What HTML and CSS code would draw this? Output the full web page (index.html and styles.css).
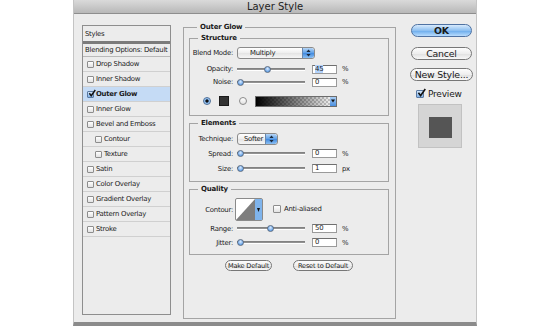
FILE: index.html
```html
<!DOCTYPE html>
<html lang="en">

<head>
    <meta charset="UTF-8">
    <meta name="viewport" content="width=device-width, initial-scale=1.0">
    <title>Layer Style</title>
    <link rel="stylesheet" href="styles.css">
</head>

<body>
    <div class="window">
        <div class="titlebar">Layer Style</div>

        <div class="content">
            <!-- left: list of effects -->
            <div class="list">
                <div class="item head">Styles</div>
                <div class="item blend">Blending Options: Default</div>
                <div class="item"><span class="cb"></span>Drop Shadow</div>
                <div class="item"><span class="cb"></span>Inner Shadow</div>
                <div class="item on">
                    <span class="cb checked">
                        <svg width="9" height="9" viewBox="0 0 9 9"><path d="M1.5 4.2 L3.6 7 L8.2 0.6" fill="none" stroke="#111" stroke-width="1.6"/></svg>
                    </span>Outer Glow
                </div>
                <div class="item"><span class="cb"></span>Inner Glow</div>
                <div class="item"><span class="cb"></span>Bevel and Emboss</div>
                <div class="item sub"><span class="cb"></span>Contour</div>
                <div class="item sub"><span class="cb"></span>Texture</div>
                <div class="item"><span class="cb"></span>Satin</div>
                <div class="item"><span class="cb"></span>Color Overlay</div>
                <div class="item"><span class="cb"></span>Gradient Overlay</div>
                <div class="item"><span class="cb"></span>Pattern Overlay</div>
                <div class="item"><span class="cb"></span>Stroke</div>
            </div>

            <!-- middle: settings -->
            <div class="group outer">
                <div class="legend">Outer Glow</div>

                <div class="group structure">
                    <div class="legend">Structure</div>
                    <div class="row r1">
                        <span class="lbl">Blend Mode:</span>
                        <div class="popup blendmode">Multiply<span class="stepper"><svg width="5" height="8" viewBox="0 0 5 8"><path d="M2.5 0.5 L4.6 3 L0.4 3 Z M2.5 7.5 L4.6 5 L0.4 5 Z" fill="#1c2a3c"/></svg></span></div>
                    </div>
                    <div class="row r2">
                        <span class="lbl">Opacity:</span>
                        <div class="slider"><span class="knob" style="margin-left: 27px"></span></div>
                        <span class="field"><span class="sel">45</span></span>
                        <span class="unit">%</span>
                    </div>
                    <div class="row r3">
                        <span class="lbl">Noise:</span>
                        <div class="slider"><span class="knob" style="margin-left: 0px"></span></div>
                        <span class="field">0</span>
                        <span class="unit">%</span>
                    </div>
                    <div class="row r4">
                        <span class="radio on"></span>
                        <span class="swatch"></span>
                        <span class="radio"></span>
                        <div class="gradient"><span class="grad-drop"><svg width="4" height="4" viewBox="0 0 4 4"><path d="M0 0.5 L4 0.5 L2 3.5 Z" fill="#111"/></svg></span></div>
                    </div>
                </div>

                <div class="group elements">
                    <div class="legend">Elements</div>
                    <div class="row e1">
                        <span class="lbl">Technique:</span>
                        <div class="popup technique">Softer<span class="stepper"><svg width="5" height="8" viewBox="0 0 5 8"><path d="M2.5 0.5 L4.6 3 L0.4 3 Z M2.5 7.5 L4.6 5 L0.4 5 Z" fill="#1c2a3c"/></svg></span></div>
                    </div>
                    <div class="row e2">
                        <span class="lbl">Spread:</span>
                        <div class="slider"><span class="knob" style="margin-left: 0px"></span></div>
                        <span class="field">0</span>
                        <span class="unit">%</span>
                    </div>
                    <div class="row e3">
                        <span class="lbl">Size:</span>
                        <div class="slider"><span class="knob" style="margin-left: 0px"></span></div>
                        <span class="field">1</span>
                        <span class="unit">px</span>
                    </div>
                </div>

                <div class="group quality">
                    <div class="legend">Quality</div>
                    <div class="row q1">
                        <span class="lbl">Contour:</span>
                        <svg class="contour" width="28" height="23" viewBox="0 0 28 23">
                            <rect x="0.5" y="0.5" width="27" height="22" rx="1.5" fill="#fff" stroke="#8a8a8a"/>
                            <path d="M1 22 L20 1 L20 22 Z" fill="#7e7e7e"/>
                            <rect x="20" y="1" width="7" height="21" fill="#7fb4ec"/>
                            <path d="M22 10 L25 10 L23.5 14 Z" fill="#111"/>
                        </svg>
                        <span class="cb aa"></span>
                        <span class="aa-text">Anti-aliased</span>
                    </div>
                    <div class="row q2">
                        <span class="lbl">Range:</span>
                        <div class="slider"><span class="knob" style="margin-left: 30px"></span></div>
                        <span class="field">50</span>
                        <span class="unit">%</span>
                    </div>
                    <div class="row q3">
                        <span class="lbl">Jitter:</span>
                        <div class="slider"><span class="knob" style="margin-left: 0px"></span></div>
                        <span class="field">0</span>
                        <span class="unit">%</span>
                    </div>
                </div>

                <div class="defaults">
                    <span class="btn small make">Make Default</span>
                    <span class="btn small reset">Reset to Default</span>
                </div>
            </div>

            <!-- right: buttons and preview -->
            <div class="side">
                <span class="btn big ok">OK</span>
                <span class="btn big cancel">Cancel</span>
                <span class="btn big newstyle">New Style...</span>
                <div class="preview-row">
                    <span class="cb checked big-cb">
                        <svg width="10" height="10" viewBox="0 0 10 10"><path d="M1.6 4.8 L4 8 L9.2 0.6" fill="none" stroke="#111" stroke-width="1.8"/></svg>
                    </span>
                    <span class="preview-text">Preview</span>
                </div>
                <div class="preview"><span class="preview-swatch"></span></div>
            </div>
        </div>
    </div>
</body>

</html>
```

FILE: styles.css
```css
body {
    margin: 0;
    background: #ffffff;
    overflow: hidden;
    font-family: "DejaVu Sans", "Liberation Sans", sans-serif;
    color: #1a1a1a;
}

.window {
    width: 404px;
    height: 326px;
    margin-left: 73px;
    box-sizing: border-box;
    background: #ececec;
    border-left: 1px solid #c4c4c4;
    border-right: 1px solid #c4c4c4;
    border-bottom: 4px solid #8b8b8b;
}

.titlebar {
    height: 14px;
    box-sizing: border-box;
    background: linear-gradient(#dadada, #b8b8b8);
    border-bottom: 1px solid #8e8e8e;
    text-align: center;
    font-size: 10px;
    line-height: 13px;
    color: #1e1e1e;
}

.content {
    display: flex;
    align-items: flex-start;
    padding-left: 8px;
}

/* ---------- effect list ---------- */
.list {
    margin-top: 11px;
    width: 89px;
    height: 290px;
    box-sizing: border-box;
    border: 1px solid #8e8e8e;
    flex: none;
}

.item {
    height: 14px;
    border-bottom: 1px solid #d0d0d0;
    display: flex;
    align-items: center;
    padding-left: 4px;
    font-size: 6.9px;
    letter-spacing: -0.25px;
    white-space: nowrap;
}

.item.head {
    height: 15px;
    border-bottom: 3px solid #7b7b7b;
    padding-left: 2px;
}

.item.blend {
    height: 12px;
    padding-left: 2px;
    border-bottom-color: #b9b9b9;
}

.item.on {
    background: #c5dbf5;
    font-weight: bold;
}

.item.sub {
    padding-left: 12px;
}

.cb {
    width: 7px;
    height: 7px;
    box-sizing: border-box;
    border: 1px solid #8d8d8d;
    border-radius: 1px;
    background: linear-gradient(#ffffff, #e2e2e2);
    margin-right: 2px;
    flex: none;
    display: flex;
    align-items: center;
    justify-content: center;
}

.cb.checked {
    background: linear-gradient(#d4e6fa, #7fb1e8);
    border-color: #5a7aa3;
}

.cb.checked svg {
    margin: -2px -3px 0 0;
}

/* ---------- group boxes ---------- */
.group {
    border: 1px solid #a4a4a4;
    box-sizing: border-box;
}

.legend {
    width: max-content;
    margin: -5px 0 0 8px;
    padding: 0 3px;
    background: #ececec;
    font-weight: bold;
    font-size: 7px;
    letter-spacing: -0.2px;
    line-height: 9px;
}

.outer {
    margin: 13px 0 0 12px;
    width: 213px;
    height: 292px;
    padding: 0 6px 0 5px;
    flex: none;
}

.structure {
    margin-top: 6px;
    padding-bottom: 8px;
}

.elements {
    margin-top: 7px;
    padding-bottom: 7px;
}

.quality {
    margin-top: 7px;
    padding-bottom: 6px;
}

.row {
    display: flex;
    align-items: center;
    height: 12px;
    font-size: 6.9px;
    letter-spacing: -0.25px;
}

.r1 { margin-top: 4px; }
.r2 { margin-top: 4px; }
.r3 { margin-top: 1px; }
.r4 { margin-top: 7px; padding-left: 13px; }

.e1 { margin-top: 5px; }
.e2 { margin-top: 3px; height: 11px; }
.e3 { margin-top: 4px; height: 11px; }

.q1 { margin-top: 4px; height: 23px; }
.q2 { margin-top: 2px; height: 11px; }
.q3 { margin-top: 3px; height: 11px; }

.lbl {
    width: 43px;
    margin-right: 4px;
    text-align: right;
    flex: none;
    white-space: nowrap;
}

/* popup menus */
.popup {
    height: 12px;
    box-sizing: border-box;
    border: 1px solid #8b8b8b;
    border-radius: 3px;
    background: linear-gradient(#ffffff, #eeeeee 50%, #e4e4e4 51%, #f6f6f6);
    display: flex;
    align-items: center;
    padding-left: 12px;
    justify-content: space-between;
    overflow: hidden;
}

.blendmode { width: 78px; }

.technique {
    width: 41px;
    padding-left: 6px;
}

.stepper {
    width: 11px;
    height: 10px;
    background: linear-gradient(#b7d6f6, #5c9ee6 50%, #3f88de 51%, #8cc0f3);
    border-left: 1px solid #6688b0;
    border-radius: 0 2px 2px 0;
    display: flex;
    align-items: center;
    justify-content: center;
}

/* sliders */
.slider {
    width: 68px;
    height: 9px;
    flex: none;
    display: flex;
    align-items: center;
    background: linear-gradient(to bottom, transparent 3px, #7a7a7a 3px, #9a9a9a 5px, #ffffff 5px, #ffffff 6px, transparent 6px);
    border-radius: 2px;
}

.knob {
    width: 7px;
    height: 7px;
    box-sizing: border-box;
    border-radius: 50%;
    border: 1px solid #5b6c82;
    background: radial-gradient(circle at 50% 35%, #dcecff, #5f9ee6 75%);
}

.field {
    width: 25px;
    height: 9px;
    box-sizing: border-box;
    margin-left: 7px;
    border: 1px solid #9a9a9a;
    border-top-color: #6f6f6f;
    background: #ffffff;
    padding-left: 2px;
    line-height: 7px;
    flex: none;
}

.sel {
    background: #b4d3fb;
}

.unit {
    margin-left: 5px;
}

/* color row */
.radio {
    width: 8px;
    height: 8px;
    box-sizing: border-box;
    border-radius: 50%;
    border: 1px solid #8a8a8a;
    background: linear-gradient(#ffffff, #e0e0e0);
    flex: none;
}

.radio.on {
    border-color: #4e6f98;
    background: radial-gradient(circle, #111 0 1.4px, #7db3ec 1.8px, #c9e0f9);
}

.swatch {
    width: 10px;
    height: 10px;
    box-sizing: border-box;
    margin: 0 10px 0 8px;
    background: #333333;
    border: 1px solid #1b1b1b;
    flex: none;
}

.gradient {
    width: 82px;
    height: 11px;
    margin-left: 8px;
    box-sizing: border-box;
    border: 1px solid #6c6c6c;
    background:
        linear-gradient(to right, #000000, rgba(0, 0, 0, 0)),
        repeating-conic-gradient(#cfcfcf 0 25%, #ffffff 0 50%) 0 0 / 4px 4px;
    display: flex;
    justify-content: flex-end;
}

.grad-drop {
    width: 6px;
    background: linear-gradient(#a8cdf5, #4b8fdf);
    display: flex;
    align-items: center;
    justify-content: center;
}

/* contour */
.contour {
    margin-left: -2px;
    flex: none;
}

.cb.aa {
    width: 8px;
    height: 8px;
    margin: -2px 0 0 10px;
}

.aa-text {
    margin: -2px 0 0 3px;
}

/* buttons */
.btn {
    box-sizing: border-box;
    display: flex;
    align-items: center;
    justify-content: center;
    border: 1px solid #777777;
    background: linear-gradient(#fdfdfd, #eeeeee 50%, #dfdfdf 51%, #f8f8f8);
    white-space: nowrap;
}

.defaults {
    margin-top: 5px;
    display: flex;
    justify-content: center;
    gap: 21px;
}

.btn.small {
    height: 11px;
    border-radius: 6px;
    font-size: 6.6px;
    letter-spacing: -0.2px;
}

.make { width: 47px; }
.reset { width: 60px; }

.side {
    margin: 10px 0 0 15px;
    width: 61px;
    flex: none;
}

.btn.big {
    height: 13px;
    border-radius: 7px;
    font-size: 9.4px;
    letter-spacing: -0.2px;
}

.ok {
    background: linear-gradient(#d8eafc, #8ec0f1 50%, #68aaeb 51%, #b9dcfd);
    border-color: #4f72a2;
    font-weight: bold;
}

.cancel { margin-top: 10px; }

.newstyle {
    margin: 8px -1px 0 -1px;
}

.preview-row {
    margin: 9px 0 0 5px;
    height: 8px;
    display: flex;
    align-items: center;
}

.cb.big-cb {
    width: 8px;
    height: 8px;
    margin-right: 4px;
}

.preview-text {
    font-size: 9px;
    letter-spacing: -0.2px;
}

.preview {
    margin: 6px 0 0 7px;
    width: 44px;
    height: 44px;
    box-sizing: border-box;
    background: #d5d5d5;
    border: 1px solid #c2c2c2;
    display: flex;
    align-items: center;
    justify-content: center;
}

.preview-swatch {
    width: 23px;
    height: 21px;
    background: #555555;
    margin-top: 2px;
}
```
